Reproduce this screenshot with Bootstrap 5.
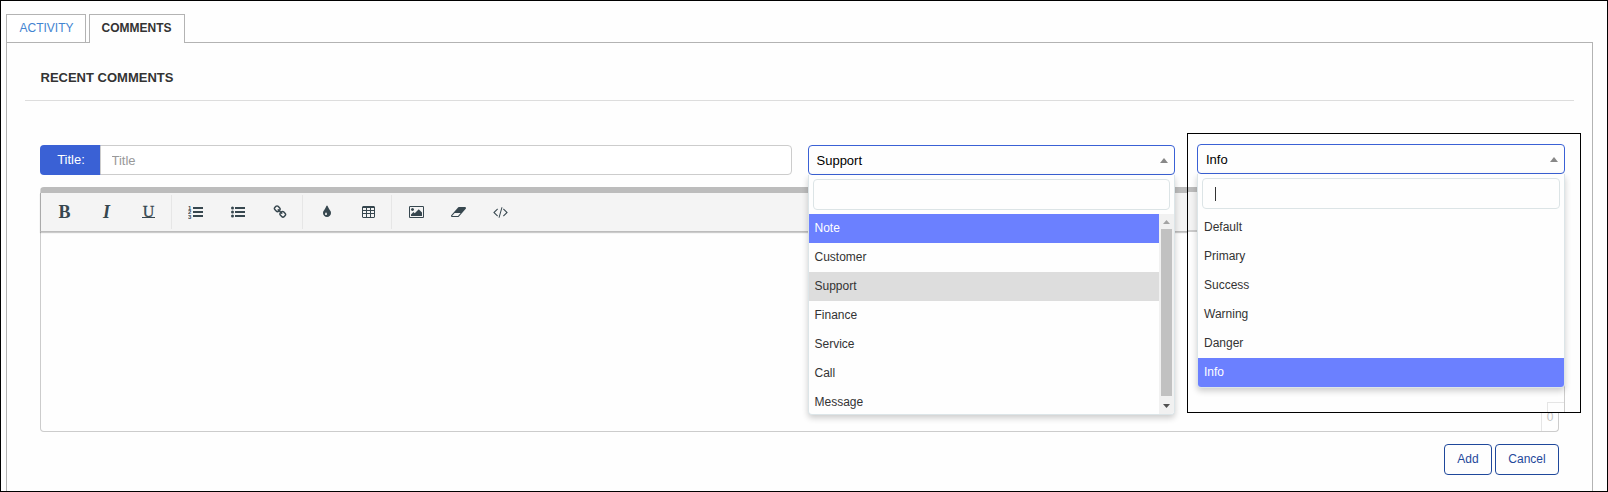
<!DOCTYPE html>
<html lang="en">
<head>
<meta charset="utf-8">
<title>Comments</title>
<link href="https://cdn.jsdelivr.net/npm/bootstrap@5.3.0/dist/css/bootstrap.min.css" rel="stylesheet">
<style>
body{font-family:"Liberation Sans",Arial,sans-serif;font-size:12px;line-height:18px;color:#333;background:#fefefe}
.page-frame{width:1608px;height:492px;border:1px solid #000;padding:13px 14px 0 5px;overflow:hidden;display:flex;flex-direction:column}
.nav-tabs{--bs-nav-tabs-border-width:0;gap:3px;height:28px;flex-shrink:0}
.nav-tabs .nav-link{margin:0;border:1px solid #b3b3b3;border-bottom:0;border-radius:0;padding:4px 0 4px 12.5px;height:28px;color:#4384d1;background:#fff;white-space:nowrap}
.nav-tabs .nav-link.active{height:29px;font-weight:bold;color:#333;border-color:#b3b3b3;padding:4px 0 4px 11.5px;position:relative;background:#fefefe;width:96px}
.nav-tabs .nav-link:first-child{width:80px}
.tab-panel{border:1px solid #b3b3b3;border-bottom:0;flex:1;padding:0 18px}
.panel-title{font-size:13px;line-height:20px;font-weight:bold;margin:0;padding:25px 15px 12px 15.5px;border-bottom:1px solid #ddd;height:58px}
.form-area{padding:44px 15px 0}
.title-row{height:30px;gap:16px}
.title-group{width:752px}
.input-group-text{width:61px;background:#3a61d5;color:#fff;border:0;border-radius:4px;padding:0 0 0 1px;justify-content:center;font-size:13px}
.title-group .form-control{border:1px solid #ccc;border-radius:4px;font-size:13px;padding:0 10.5px;height:30px}
.title-group .form-control::placeholder{color:#999}
.pick{position:relative;width:367px}
.pick-box{height:30px;border:1px solid #3a61d5;border-radius:4px;padding:0 6px 0 7.5px;font-size:13px;color:#000;background:#fefefe}
.pick-menu{position:absolute;left:0;top:30px;width:100%;border:1px solid #dce5e8;border-top:0;border-radius:0 0 4px 4px;background:#fefefe;box-shadow:0 3px 6px rgba(0,0,0,.2);overflow:hidden;z-index:3}
.pick-search{height:31px;border:1px solid #dce4e6;border-radius:4px;margin:4px 4px 4px;padding:8px 12px}
.caret-line{width:1px;height:14px;background:#333}
.pick-list{border-radius:0}
.pick-list .list-group-item{height:29px;flex-shrink:0;border:0;border-radius:0;padding:5px 5.5px;color:#333;background:transparent}
.callout .pick-list .list-group-item{padding-left:6px}
.callout .pick-box{padding-left:8px;padding-top:1px}
.pick-list .list-group-item.hot{background:#6b80ff;color:#fff}
.pick-list .list-group-item.chosen{background:#ddd}
.bar-track{width:15px;background:#f1f1f1}
.bar-thumb{width:11px;flex:1;background:#c1c1c1}
.arrow{width:15px;height:15px;display:block}
.editor-box{margin-top:12px;height:245px;border:1px solid #ccc;border-top:6px solid #bcbcbc;border-radius:4px;width:1519px}
.tool-bar{height:39px;margin:0 -1px;border:1px solid #aaa;border-top:0;border-bottom:1px solid #bcbcbc;background:#f4f4f4;box-shadow:0 1px 1px rgba(0,0,0,.2);padding:2px 0 2px 2px}
.tool{width:42px;height:36px;padding-left:1px;display:flex;align-items:center;justify-content:center;color:#37474f;font:bold 18px/36px "Liberation Serif",serif}
.tool svg{display:block;fill:currentColor;height:14px}
.tool-u span{font-size:16px;line-height:11px;height:12px;border-bottom:1px solid currentColor;width:13px;text-align:center;font-weight:normal;-webkit-text-stroke:.3px currentColor}
.sep{width:1px;height:34px;background:#e6e6e6;margin:0 2px}
.counter{width:17px;height:29px;border-left:1px solid #e5e5e5;border-top:1px solid #e5e5e5;color:#c4c4c4;text-align:center;padding-top:5px}
.actions{gap:3px;margin-top:12px;width:1519px}
.btn-line{height:31px;padding:5px 0 6px;width:48px;font-size:12px;line-height:18px;border:1px solid #1f489b;border-radius:4px;color:#1f489b;background:#fefefe}
.btn-line + .btn-line{width:64px}
.callout{position:absolute;left:1187px;top:133px;width:394px;height:280px;border:1px solid #000;background:#fefefe;padding:10px 0 0 9px;z-index:5}
.behind{position:absolute;left:0;top:53px;width:9px;height:45px;background:#f4f4f4;border-top:5px solid #bcbcbc;border-bottom:2px solid #ccc}
.corner{position:absolute;left:359px;top:268px;width:18px;height:10px;border-left:1px solid #e5e5e5;border-top:1px solid #e5e5e5}
.edge{position:absolute;left:376px;top:200px;width:1px;height:78px;background:#ccc}
</style>
</head>
<body>
<div class="page-frame">
  <nav class="nav nav-tabs"><a class="nav-link">ACTIVITY</a><a class="nav-link active">COMMENTS</a></nav>
  <main class="tab-panel">
    <h1 class="panel-title">RECENT COMMENTS</h1>
    <div class="form-area">
      <div class="title-row d-flex">
        <div class="input-group title-group"><span class="input-group-text">Title:</span><input class="form-control" placeholder="Title"></div>
        <div class="pick">
          <div class="pick-box d-flex align-items-center justify-content-between" style="padding-top:1px"><span>Support</span><svg width="8" height="5"><path d="M0 5L4 0L8 5Z" fill="#888"/></svg></div>
          <div class="pick-menu" style="height:240px">
            <div class="pick-search"></div>
            <div class="d-flex" style="height:200px">
              <div class="list-group pick-list flex-grow-1 overflow-hidden"><div class="list-group-item hot">Note</div><div class="list-group-item">Customer</div><div class="list-group-item chosen">Support</div><div class="list-group-item">Finance</div><div class="list-group-item">Service</div><div class="list-group-item">Call</div><div class="list-group-item">Message</div></div>
              <div class="bar-track d-flex flex-column align-items-center"><svg class="arrow"><path d="M4 10L7.500 6L11 10Z" fill="#a3a3a3"/></svg><div class="bar-thumb"></div><svg class="arrow" style="height:18px"><path d="M4 8L7.500 12L11 8Z" fill="#505050"/></svg></div>
            </div>
          </div>
        </div>
      </div>
      <div class="editor-box d-flex flex-column">
        <div class="tool-bar d-flex align-items-center">
          <div class="tool">B</div><div class="tool fst-italic">I</div><div class="tool tool-u"><span>U</span></div><div class="sep"></div>
          <div class="tool"><svg width="15" height="14" viewBox="0 0 15 14"><path d="M5 2h10v2H5zM5 6h10v2H5zM5 10h10v2H5z"/><g font-size="6" font-weight="bold" font-family="Liberation Sans"><text x="0" y="4.500">1</text><text x="0" y="9.200">2</text><text x="0" y="14">3</text></g></svg></div>
          <div class="tool"><svg width="14" viewBox="0 0 14 14"><path d="M4 2h10v2H4zM4 6h10v2H4zM4 10h10v2H4z"/><circle cx="1.500" cy="3" r="1.500"/><circle cx="1.500" cy="7" r="1.500"/><circle cx="1.500" cy="11" r="1.500"/></svg></div>
          <div class="tool"><svg width="14" viewBox="0 0 1792 1792"><path d="M1520 1216q0-40-28-68l-208-208q-28-28-68-28-42 0-72 32 3 3 19 18.500t21.500 21.500 15 19 13 25.500 3.500 27.500q0 40-28 68t-68 28q-15 0-27.500-3.500t-25.500-13-19-15-21.500-21.500-18.500-19q-33 31-33 73 0 40 28 68l206 207q27 27 68 27 40 0 68-26l147-146q28-28 28-67zm-703-705q0-40-28-68l-206-207q-28-28-68-28-39 0-68 27l-147 146q-28 28-28 67 0 40 28 68l208 208q27 27 68 27 42 0 72-31-3-3-19-18.500t-21.500-21.500-15-19-13-25.500-3.500-27.500q0-40 28-68t68-28q15 0 27.500 3.500t25.500 13 19 15 21.500 21.500 18.500 19q33-31 33-73zm895 705q0 120-85 203l-147 146q-83 83-203 83-121 0-204-85l-206-207q-83-83-83-203 0-123 88-209l-88-88q-86 88-208 88-120 0-204-84l-208-208q-84-84-84-204t85-203l147-146q83-83 203-83 121 0 204 85l206 207q83 83 83 203 0 123-88 209l88 88q86-88 208-88 120 0 204 84l208 208q84 84 84 204z"/></svg></div>
          <div class="sep"></div>
          <div class="tool"><svg width="14" viewBox="0 0 1792 1792"><path d="M896 1152q0-36-20-69-1-1-15.500-22.500t-25.500-38-25-44-21-50.500q-4-16-21-16t-21 16q-7 23-21 50.500t-25 44-25.500 38-15.500 22.500q-20 33-20 69 0 53 37.500 90.500t90.500 37.500 90.500-37.500 37.500-90.500zm512-128q0 212-150 362t-362 150-362-150-150-362q0-145 81-275 6-9 62.500-90.500t101-151 99.500-178 83-201.500q9-30 34-47t51-17 51.500 17 33.500 47q28 93 83 201.500t99.500 178 101 151 62.500 90.500q81 127 81 275z"/></svg></div>
          <div class="tool"><svg width="13" viewBox="0 0 13 14"><path fill-rule="evenodd" d="M1 1h11l1 1v10l-1 1H1l-1-1V2zM1 3v2h3V3zM5 3v2h3V3zM9 3v2h3V3zM1 6v2h3V6zM5 6v2h3V6zM9 6v2h3V6zM1 9v3h3v-3zM5 9v3h3v-3zM9 9v3h3v-3z"/></svg></div>
          <div class="sep"></div>
          <div class="tool" style="padding-left:2px"><svg width="15" viewBox="0 0 1920 1792"><path d="M640 576q0 80-56 136t-136 56-136-56-56-136 56-136 136-56 136 56 56 136zm1024 384v448h-1408v-192l320-320 160 160 512-512zm96-704h-1600q-13 0-22.500 9.500t-9.500 22.500v1216q0 13 9.500 22.500t22.500 9.500h1600q13 0 22.500-9.500t9.500-22.500v-1216q0-13-9.500-22.500t-22.500-9.500zm160 32v1216q0 66-47 113t-113 47h-1600q-66 0-113-47t-47-113v-1216q0-66 47-113t113-47h1600q66 0 113 47t47 113z"/></svg></div>
          <div class="tool" style="padding-left:2px"><svg width="15" viewBox="0 0 1920 1792"><path d="M896 1408l336-384h-768l-336 384h768zm1013-1077q15 34 9.500 71.500t-30.500 65.500l-896 1024q-38 44-96 44h-768q-38 0-69.500-20.500t-47.500-54.500q-15-34-9.500-71.500t30.500-65.500l896-1024q38-44 96-44h768q38 0 69.500 20.500t47.500 54.500z"/></svg></div>
          <div class="tool" style="padding-left:2px"><svg width="15" viewBox="-64 0 1920 1792"><path d="M553 1399l-50 50q-10 10-23 10t-23-10l-466-466q-10-10-10-23t10-23l466-466q10-10 23-10t23 10l50 50q10 10 10 23t-10 23l-393 393 393 393q10 10 10 23t-10 23zm591-1067l-373 1291q-4 13-15.500 19.500t-23.500 2.500l-62-17q-13-4-19.500-15.500t-2.500-24.500l373-1291q4-13 15.500-19.500t23.500-2.500l62 17q13 4 19.500 15.500t2.500 24.500zm657 651l-466 466q-10 10-23 10t-23-10l-50-50q-10-10-10-23t10-23l393-393-393-393q-10-10-10-23t10-23l50-50q10-10 23-10t23 10l466 466q10 10 10 23t-10 23z"/></svg></div>
        </div>
        <div class="counter mt-auto ms-auto">0</div>
      </div>
      <div class="actions d-flex justify-content-end"><button class="btn btn-line">Add</button><button class="btn btn-line">Cancel</button></div>
    </div>
  </main>
</div>
<section class="callout">
  <div class="behind"></div><div class="corner"></div><div class="edge"></div>
  <div class="pick" style="width:368px">
    <div class="pick-box d-flex align-items-center justify-content-between"><span>Info</span><svg width="8" height="5"><path d="M0 5L4 0L8 5Z" fill="#888"/></svg></div>
    <div class="pick-menu">
      <div class="pick-search"><div class="caret-line"></div></div>
      <div class="list-group pick-list"><div class="list-group-item">Default</div><div class="list-group-item">Primary</div><div class="list-group-item">Success</div><div class="list-group-item">Warning</div><div class="list-group-item">Danger</div><div class="list-group-item hot">Info</div></div>
    </div>
  </div>
</section>
<script src="https://cdn.jsdelivr.net/npm/bootstrap@5.3.0/dist/js/bootstrap.bundle.min.js"></script>
</body>
</html>
